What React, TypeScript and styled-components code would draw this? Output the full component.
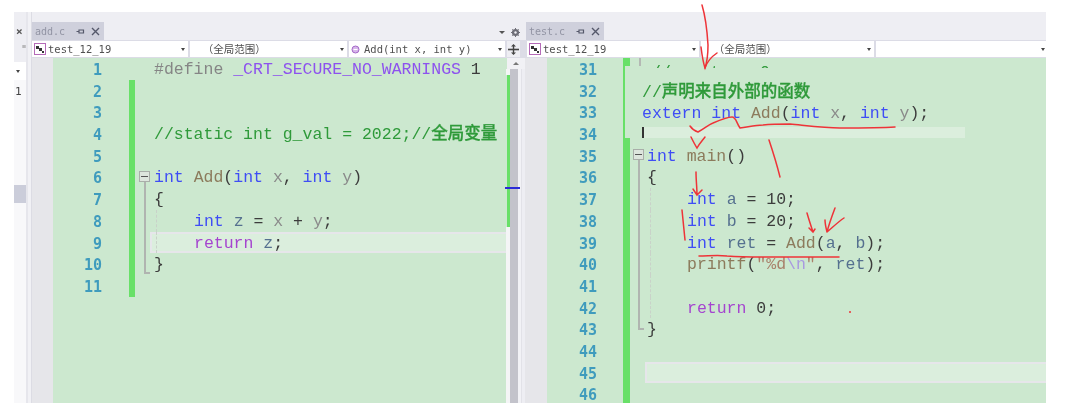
import styled, { createGlobalStyle } from "styled-components";
import { ReactNode } from "react";

const GlobalStyle = createGlobalStyle`
  html, body {
    margin: 0;
    background: #fff;
    overflow: hidden;
  }
`;

const ROW = 21.7;
const CODE_FONT = `"Liberation Mono", "Noto Sans CJK SC", monospace`;
const UI_FONT = `"DejaVu Sans Mono", "Noto Sans CJK SC", monospace`;

const colors = {
  kw: "#3f4df5",
  fn: "#8c7b5c",
  param: "#8a8a8a",
  local: "#55708f",
  comment: "#2f9a3a",
  macro: "#8d52ee",
  dir: "#858585",
  ret: "#a545cf",
  str: "#a8806a",
  esc: "#a99ae0",
  plain: "#3c3c3c",
};

const Page = styled.div`
  position: relative;
  width: 1088px;
  height: 404px;
  background: #fff;
  overflow: hidden;
`;

const Window = styled.div`
  display: flex;
  width: 1032px;
  height: 391px;
  margin: 12px 0 0 14px;
  background: #eeeef3;
  overflow: hidden;
  filter: blur(0.45px);
`;

const Sidebar = styled.div`
  width: 12px;
  display: flex;
  flex-direction: column;
  background: linear-gradient(#eeeef3 50px, #f8f8fa 50px);
  font: 10px ${UI_FONT};
  color: #444;
`;

const SideClose = styled.div`
  height: 19px;
  margin-top: 10px;
  padding-left: 2px;
  line-height: 19px;
  font-size: 11px;
  font-weight: bold;
  color: #555;
`;

const SideDots = styled.div`
  height: 20px;
  padding: 0 0 0 7px;
  line-height: 18px;
  color: #888;
`;

const SideSelect = styled.div`
  height: 18px;
  margin-top: 1px;
  background: #fff;
  display: flex;
  align-items: center;
  justify-content: flex-end;
  padding-right: 3px;
`;

const SideNumber = styled.div`
  margin-top: 4px;
  padding-left: 1px;
  height: 15px;
  line-height: 15px;
  font-size: 11px;
`;

const SideThumb = styled.div`
  height: 18px;
  margin-top: 86px;
  background: #cbcdda;
`;

const SideEdge = styled.div`
  width: 6px;
  background: linear-gradient(90deg, #e6e6ec 0 2px, #f1f1f5 2px 5px, #dcdce4 5px);
`;

const Pane = styled.div<{ $w: number }>`
  width: ${(p) => p.$w}px;
  flex: none;
  display: flex;
  flex-direction: column;
`;

const TabStrip = styled.div`
  height: 28px;
  display: flex;
  align-items: flex-end;
  justify-content: space-between;
`;

const Tab = styled.div<{ $w: number; $ml?: number }>`
  width: ${(p) => p.$w}px;
  height: 18px;
  margin-left: ${(p) => p.$ml ?? 0}px;
  padding: 0 4px 0 3px;
  box-sizing: border-box;
  background: #cfd0dc;
  display: flex;
  align-items: center;
  font: 10px ${UI_FONT};
  color: #9294a4;
`;

const TabName = styled.span`
  flex: 1;
`;

const TabIcon = styled.svg`
  display: block;
  margin-left: 6px;
`;

const PaneTools = styled.div`
  display: flex;
  align-items: center;
  gap: 6px;
  padding: 0 5px 3px 0;
`;

const Toolbar = styled.div<{ $pad?: number }>`
  height: 18px;
  padding: 1px 0 1px ${(p) => p.$pad ?? 0}px;
  box-sizing: border-box;
  display: flex;
  gap: 2px;
  background: #dcdce6;
  overflow: hidden;
`;

const Select = styled.div<{ $w: number }>`
  width: ${(p) => p.$w}px;
  flex: none;
  height: 16px;
  background: #fff;
  display: flex;
  align-items: center;
  font: 10.5px/16px ${UI_FONT};
  color: #505050;
  white-space: pre;
`;

const SelectLabel = styled.span`
  flex: 1;
  height: 16px;
  overflow: hidden;
`;

const SelectIcon = styled.svg<{ $gap?: number }>`
  display: block;
  margin: 0 ${(p) => p.$gap ?? 2}px 0 2px;
  flex: none;
`;

const SelectArrow = styled.span`
  width: 0;
  height: 0;
  margin-right: 3px;
  border-left: 2.5px solid transparent;
  border-right: 2.5px solid transparent;
  border-top: 3px solid #444;
`;

const SplitButton = styled.div`
  width: 13px;
  flex: none;
  display: flex;
  align-items: center;
  justify-content: center;
  background: #eeeef3;
`;

const Body = styled.div`
  flex: 1;
  display: flex;
  min-height: 0;
  overflow: hidden;
`;

const Gutter = styled.div<{ $w: number }>`
  width: ${(p) => p.$w}px;
  flex: none;
  background: #e6e6ea;
`;

const Editor = styled.div`
  flex: 1;
  min-width: 0;
  display: flex;
  background: #cce8cf;
  overflow: hidden;
`;

const Numbers = styled.div<{ $w: number; $gap: number }>`
  width: ${(p) => p.$w}px;
  margin-right: ${(p) => p.$gap}px;
  flex: none;
`;

const LineNo = styled.div`
  height: ${ROW}px;
  text-align: right;
  font: bold 15px/${ROW + 3}px "DejaVu Sans Mono", monospace;
  color: #3f9bbd;
`;

const Margin = styled.div<{ $w: number }>`
  width: ${(p) => p.$w}px;
  flex: none;
`;

const MarginSegment = styled.div<{ $h: number; $w?: number; $off?: boolean }>`
  height: ${(p) => p.$h}px;
  width: ${(p) => p.$w ?? "100%"}${(p) => (p.$w ? "px" : "")};
  background: ${(p) => (p.$off ? "transparent" : "#68e068")};
`;

const FoldColumn = styled.div<{ $w: number; $pad: number }>`
  width: ${(p) => p.$w}px;
  padding-left: ${(p) => p.$pad}px;
  box-sizing: border-box;
  flex: none;
  display: flex;
  flex-direction: column;
`;

const FoldStub = styled.div<{ $h: number; $ml: number }>`
  height: ${(p) => p.$h}px;
  margin-left: ${(p) => p.$ml}px;
  width: 2px;
  background: #b4b8b4;
`;

const FoldSpacer = styled.div<{ $h: number }>`
  height: ${(p) => p.$h}px;
  flex: none;
`;

const FoldBox = styled.div`
  width: 11px;
  height: 11px;
  flex: none;
  box-sizing: border-box;
  border: 1px solid #a9aea9;
  background: #dde5dd;
  display: flex;
  align-items: center;
  justify-content: center;
  &::after {
    content: "";
    width: 7px;
    height: 1.5px;
    background: #555;
  }
`;

const FoldLine = styled.div<{ $h: number }>`
  width: 6px;
  height: ${(p) => p.$h}px;
  margin-left: 5px;
  box-sizing: border-box;
  border-left: 2px solid #b0b4b0;
  border-bottom: 2px solid #b0b4b0;
`;

const Code = styled.div`
  flex: 1;
  min-width: 0;
`;

const CodeLine = styled.div<{
  $indent?: number;
  $guide?: number;
  $current?: boolean;
  $bleed?: number;
  $drop?: number;
}>`
  display: flow-root;
  position: relative;
  height: ${ROW}px;
  box-sizing: border-box;
  padding-left: ${(p) => (p.$indent ?? 0) + (p.$bleed ?? 0)}px;
  margin-left: ${(p) => -(p.$bleed ?? 0)}px;
  font: 16.5px/${(p) => ROW + 2 + (p.$drop ?? 0) * 2}px ${CODE_FONT};
  white-space: pre;
  color: ${colors.plain};
  ${(p) =>
    p.$current &&
    `
    background: #dbeedd;
    box-shadow: inset 0 2px 0 #e6e6ea, inset 0 -2px 0 #e6e6ea, inset 2px 0 0 #e6e6ea;
  `}
  ${(p) =>
    p.$guide !== undefined &&
    `
    &::before {
      content: "";
      position: absolute;
      left: ${p.$guide}px;
      top: 0;
      bottom: 0;
      border-left: 1px dashed #c9d2c9;
    }
  `}
`;

const ClippedCode = styled.div<{ $indent: number }>`
  height: ${ROW}px;
  padding-left: ${(p) => p.$indent}px;
  font: 16.5px/${ROW + 8}px ${CODE_FONT};
  white-space: pre;
  color: ${colors.comment};
  clip-path: inset(0 0 ${ROW - 10}px 0);
`;

const CaretBar = styled.div`
  width: 321px;
  height: 11px;
  margin-top: 4px;
  background: #dbeedd;
  border-left: 2px solid #333;
`;

const Tok = styled.span<{ $k: keyof typeof colors }>`
  color: ${(p) => colors[p.$k]};
`;

const Cjk = styled.span`
  font-weight: 500;
  -webkit-text-stroke: 0.3px currentColor;
`;

const ScrollColumn = styled.div`
  width: 19px;
  flex: none;
  display: flex;
  flex-direction: column;
  background: #eeeef3;
`;

const ScrollArrow = styled.div`
  height: 11px;
  flex: none;
  display: flex;
  justify-content: center;
  align-items: center;
  background: linear-gradient(90deg, #cce8cf 0 1px, #f1f1f5 1px);
  &::after {
    content: "";
    border-left: 3px solid transparent;
    border-right: 3px solid transparent;
    border-bottom: 3px solid #777;
  }
`;

const ScrollRail = styled.div`
  position: relative;
  flex: 1;
  display: flex;
`;

const MapStrip = styled.div`
  width: 4px;
  background: #f4f5f6;
`;

const MapChange = styled.div`
  height: 152px;
  margin-top: 6px;
  background: linear-gradient(90deg, #cce8cf 0 1px, #68e068 1px);
`;

const ScrollThumb = styled.div`
  width: 8px;
  background: #c3c3cb;
`;

const ScrollMark = styled.div`
  position: absolute;
  left: -1px;
  top: 118px;
  width: 15px;
  height: 2px;
  background: #2a2ad8;
`;

const ScrollRest = styled.div`
  flex: 1;
  background: linear-gradient(90deg, #f2f2f6 0 3px, #e2e2e8 3px 4px, #eeeef3 4px);
`;

const Ink = styled.svg`
  position: absolute;
  left: 0;
  top: 0;
  pointer-events: none;
  filter: blur(0.3px);
`;

const PinIcon = () => (
  <TabIcon width="9" height="9" viewBox="0 0 9 9" fill="none" stroke="#55586a" strokeWidth="1.2">
    <path d="M0.5 4.5H3M3 2.5V6.5M3 3H7.5V6H3" />
  </TabIcon>
);

const CloseIcon = () => (
  <TabIcon width="9" height="9" viewBox="0 0 9 9" fill="none" stroke="#55586a" strokeWidth="1.4">
    <path d="M1 1L8 8M8 1L1 8" />
  </TabIcon>
);

const ScopeIcon = () => (
  <SelectIcon width="12" height="12" viewBox="0 0 12 12">
    <rect x="0.5" y="0.5" width="11" height="11" fill="#fff" stroke="#b56bb8" />
    <path d="M2 3h3v3H2zM5 5h3v3H5zM8 8h2v2H8z" fill="#333" />
  </SelectIcon>
);

const MemberIcon = () => (
  <SelectIcon $gap={4} width="9" height="9" viewBox="0 0 9 9">
    <circle cx="4.5" cy="4.5" r="3.5" fill="#d7b6ea" stroke="#a468c8" />
    <path d="M2.5 4.5h4" stroke="#fff" />
  </SelectIcon>
);

const GearIcon = () => (
  <svg width="9" height="9" viewBox="0 0 9 9">
    <circle cx="4.5" cy="4.5" r="2.7" fill="none" stroke="#6f6f78" strokeWidth="1.8" />
    <path d="M4.5 0v9M0 4.5h9M1.3 1.3l6.4 6.4M7.7 1.3L1.3 7.7" stroke="#6f6f78" strokeWidth="1" />
    <circle cx="4.5" cy="4.5" r="1.2" fill="#eeeef3" />
  </svg>
);

const SplitIcon = () => (
  <svg width="11" height="11" viewBox="0 0 11 11" fill="#444">
    <rect x="0" y="4.7" width="11" height="1.6" />
    <rect x="4.8" y="2" width="1.4" height="7" />
    <path d="M5.5 0L8 2.5H3zM5.5 11L3 8.5h5z" />
  </svg>
);

const DownTriangle = styled.span`
  border-left: 3px solid transparent;
  border-right: 3px solid transparent;
  border-top: 3px solid #555;
`;

const lineNumbers = (from: number, to: number) => {
  const out: number[] = [];
  for (let n = from; n <= to; n++) out.push(n);
  return out;
};

const Lines = ({ from, to }: { from: number; to: number }) => (
  <>
    {lineNumbers(from, to).map((n) => (
      <LineNo key={n}>{n}</LineNo>
    ))}
  </>
);

const K = ({ children }: { children: ReactNode }) => <Tok $k="kw">{children}</Tok>;
const Fn = ({ children }: { children: ReactNode }) => <Tok $k="fn">{children}</Tok>;
const Par = ({ children }: { children: ReactNode }) => <Tok $k="param">{children}</Tok>;
const Loc = ({ children }: { children: ReactNode }) => <Tok $k="local">{children}</Tok>;

const LeftPane = () => (
  <Pane $w={493}>
    <TabStrip>
      <Tab $w={72}>
        <TabName>add.c</TabName>
        <PinIcon />
        <CloseIcon />
      </Tab>
      <PaneTools>
        <DownTriangle />
        <GearIcon />
      </PaneTools>
    </TabStrip>
    <Toolbar>
      <Select $w={156}>
        <ScopeIcon />
        <SelectLabel>test_12_19</SelectLabel>
        <SelectArrow />
      </Select>
      <Select $w={157}>
        <SelectLabel>{"  （全局范围）"}</SelectLabel>
        <SelectArrow />
      </Select>
      <Select $w={156}>
        <MemberIcon />
        <SelectLabel>Add(int x, int y)</SelectLabel>
        <SelectArrow />
      </Select>
      <SplitButton>
        <SplitIcon />
      </SplitButton>
    </Toolbar>
    <Body>
      <Gutter $w={21} />
      <Editor>
        <Numbers $w={49} $gap={27}>
          <Lines from={1} to={11} />
        </Numbers>
        <Margin $w={6}>
          <MarginSegment $h={22} $off />
          <MarginSegment $h={217} />
        </Margin>
        <FoldColumn $w={19} $pad={4}>
          <FoldSpacer $h={113} />
          <FoldBox />
          <FoldLine $h={92} />
        </FoldColumn>
        <Code>
          <CodeLine>
            <Tok $k="dir">#define </Tok>
            <Tok $k="macro">_CRT_SECURE_NO_WARNINGS</Tok> 1
          </CodeLine>
          <CodeLine />
          <CodeLine />
          <CodeLine>
            <Tok $k="comment">
              //static int g_val = 2022;//<Cjk>全局变量</Cjk>
            </Tok>
          </CodeLine>
          <CodeLine />
          <CodeLine>
            <K>int</K> <Fn>Add</Fn>(<K>int</K> <Par>x</Par>, <K>int</K> <Par>y</Par>)
          </CodeLine>
          <CodeLine>{"{"}</CodeLine>
          <CodeLine $indent={40} $guide={2}>
            <K>int</K> <Loc>z</Loc> = <Par>x</Par> + <Par>y</Par>;
          </CodeLine>
          <CodeLine $indent={40} $bleed={4} $guide={6} $current>
            <Tok $k="ret">return</Tok> <Loc>z</Loc>;
          </CodeLine>
          <CodeLine>{"}"}</CodeLine>
        </Code>
      </Editor>
      <ScrollColumn>
        <ScrollArrow />
        <ScrollRail>
          <MapStrip>
            <MapChange />
          </MapStrip>
          <ScrollThumb />
          <ScrollRest />
          <ScrollMark />
        </ScrollRail>
      </ScrollColumn>
    </Body>
  </Pane>
);

const RightPane = () => (
  <Pane $w={521}>
    <TabStrip>
      <Tab $w={78} $ml={1}>
        <TabName>test.c</TabName>
        <PinIcon />
        <CloseIcon />
      </Tab>
    </TabStrip>
    <Toolbar $pad={2}>
      <Select $w={172}>
        <ScopeIcon />
        <SelectLabel>test_12_19</SelectLabel>
        <SelectArrow />
      </Select>
      <Select $w={173}>
        <SelectLabel>{"  （全局范围）"}</SelectLabel>
        <SelectArrow />
      </Select>
      <Select $w={172}>
        <SelectLabel />
        <SelectArrow />
      </Select>
    </Toolbar>
    <Body>
      <Gutter $w={22} />
      <Editor>
        <Numbers $w={50} $gap={26}>
          <Lines from={31} to={46} />
        </Numbers>
        <Margin $w={7}>
          <MarginSegment $h={8} />
          <MarginSegment $h={72} $w={2} />
          <MarginSegment $h={270} />
        </Margin>
        <FoldColumn $w={12} $pad={3}>
          <FoldStub $h={8} $ml={6} />
          <FoldSpacer $h={83} />
          <FoldBox />
          <FoldLine $h={170} />
        </FoldColumn>
        <Code>
          <ClippedCode $indent={9}>{"//  return 0;"}</ClippedCode>
          <CodeLine $drop={1}>
            <Tok $k="comment">
              //<Cjk>声明来自外部的函数</Cjk>
            </Tok>
          </CodeLine>
          <CodeLine $drop={1}>
            <K>extern</K> <K>int</K> <Fn>Add</Fn>(<K>int</K> <Par>x</Par>, <K>int</K> <Par>y</Par>);
          </CodeLine>
          <CodeLine>
            <CaretBar />
          </CodeLine>
          <CodeLine $indent={5}>
            <K>int</K> <Fn>main</Fn>()
          </CodeLine>
          <CodeLine $indent={5}>{"{"}</CodeLine>
          <CodeLine $indent={45} $guide={8}>
            <K>int</K> <Loc>a</Loc> = 10;
          </CodeLine>
          <CodeLine $indent={45} $guide={8}>
            <K>int</K> <Loc>b</Loc> = 20;
          </CodeLine>
          <CodeLine $indent={45} $guide={8}>
            <K>int</K> <Loc>ret</Loc> = <Fn>Add</Fn>(<Loc>a</Loc>, <Loc>b</Loc>);
          </CodeLine>
          <CodeLine $indent={45} $guide={8}>
            <Fn>printf</Fn>(<Tok $k="str">"%d</Tok>
            <Tok $k="esc">\n</Tok>
            <Tok $k="str">"</Tok>, <Loc>ret</Loc>);
          </CodeLine>
          <CodeLine $guide={8} />
          <CodeLine $indent={45} $guide={8}>
            <Tok $k="ret">return</Tok> 0;
          </CodeLine>
          <CodeLine $indent={5}>{"}"}</CodeLine>
          <CodeLine />
          <CodeLine $bleed={-3} $current />
        </Code>
      </Editor>
    </Body>
  </Pane>
);

const inkStrokes = [
  "M702 5C705 15 707 28 708 45C708 55 707 62 705 68",
  "M701 47C702 55 703 62 705 68C707 62 711 57 717 53",
  "M690 126C692 129 695 131 698 132C704 129 708 125 713 123C720 120 727 117 732 117C736 117 736 122 740 128C748 127 755 125 763 125C772 124 780 124 790 124C810 126 825 128 840 128C860 128 880 128 895 127",
  "M691 137C693 141 695 145 697 148C699 144 702 141 705 137",
  "M769 140C773 152 777 165 780 177",
  "M696 172C696 180 697 188 697 195M693 189L697 195L702 190",
  "M682 210C683 220 684 230 685 240",
  "M807 213C809 220 811 226 813 232M809 228L813 232L815 229",
  "M835 208C832 216 829 224 827 232C826 228 825 224 825 220M827 232C833 227 838 222 844 218",
  "M699 256C708 256 718 255 727 256C740 257 750 257 763 257C790 257 815 257 839 257",
];

export default function App() {
  return (
    <Page>
      <GlobalStyle />
      <Window>
        <Sidebar>
          <SideClose>×</SideClose>
          <SideDots>"</SideDots>
          <SideSelect>
            <SelectArrow />
          </SideSelect>
          <SideNumber>1</SideNumber>
          <SideThumb />
        </Sidebar>
        <SideEdge />
        <LeftPane />
        <RightPane />
      </Window>
      <Ink width="1088" height="404" viewBox="0 0 1088 404" fill="none" stroke="#ee3338" strokeWidth="1.5" strokeLinecap="round">
        {inkStrokes.map((d) => (
          <path key={d} d={d} />
        ))}
        <circle cx="850" cy="312" r="1" fill="#ee3338" stroke="none" />
      </Ink>
    </Page>
  );
}
